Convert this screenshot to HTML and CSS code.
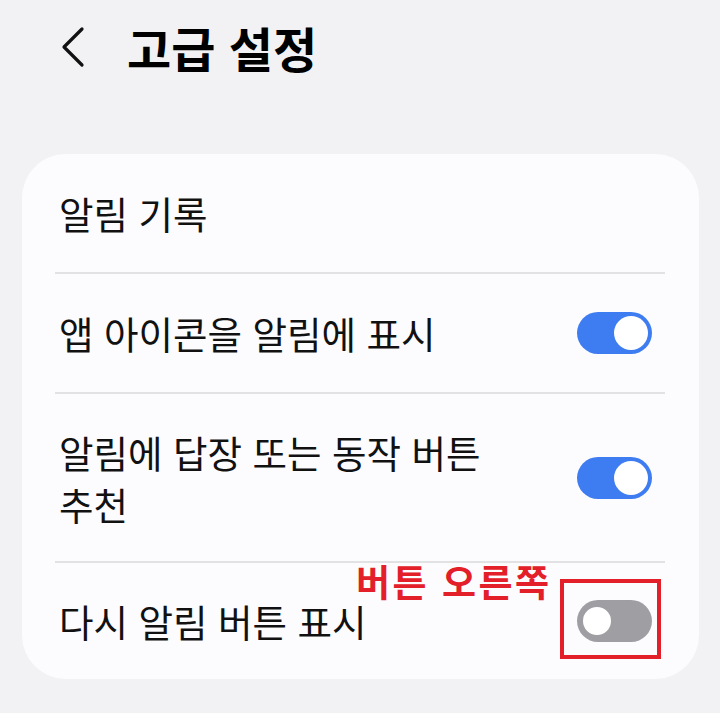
FILE: index.html
```html
<!DOCTYPE html>
<html lang="ko">
<head>
    <meta charset="UTF-8">
    <meta name="viewport" content="width=device-width, initial-scale=1.0">
    <title>고급 설정</title>
    <link rel="stylesheet" href="styles.css">
</head>
<body>

    <header class="top-bar">
        <svg class="back" width="24" height="42" viewBox="0 0 24 42">
            <path d="M21 3 L3 21 L21 39" fill="none" stroke="#111" stroke-width="3.2" stroke-linecap="round" stroke-linejoin="round"/>
        </svg>
        <h1>고급 설정</h1>
    </header>

    <div class="card">
        <div class="row">
            <span class="label">알림 기록</span>
        </div>
        <div class="divider"></div>

        <div class="row">
            <span class="label">앱 아이콘을 알림에 표시</span>
            <span class="switch on"><span class="thumb"></span></span>
        </div>
        <div class="divider"></div>

        <div class="row tall">
            <span class="label">알림에 답장 또는 동작 버튼<br>추천</span>
            <span class="switch on"><span class="thumb"></span></span>
        </div>
        <div class="divider"></div>

        <div class="row last">
            <span class="label">다시 알림 버튼 표시</span>
            <span class="switch"><span class="thumb"></span></span>
            <!-- annotation -->
            <span class="note">버튼 오른쪽</span>
            <span class="note-box"></span>
        </div>
    </div>

</body>
</html>
```

FILE: styles.css
```css
body {
    margin: 0;
    background: #f2f2f4;
    font-family: "Noto Sans CJK KR", "Noto Sans", sans-serif;
    color: #111;
}

/* Barre du haut */
.top-bar {
    height: 94px;
    display: flex;
    align-items: center;
    padding-left: 61px;
}

.back {
    display: block;
}

.top-bar h1 {
    margin: 0 0 0 42px;
    font-size: 48px;
    font-weight: 700;
    line-height: 1;
    color: #000;
}

/* Carte des options */
.card {
    margin: 60px 21px 0 22px;
    background: #fcfcfe;
    border-radius: 44px;
}

.row {
    position: relative;
    min-height: 118px;
    display: flex;
    align-items: center;
    gap: 24px;
    padding: 0 47px 0 37px;
    box-sizing: border-box;
}

.row.tall {
    min-height: 167px;
}

.row.last {
    min-height: 116px;
}

.label {
    flex: 1;
    font-size: 37.5px;
    line-height: 52px;
}

.divider {
    height: 2px;
    margin: 0 34px 0 33px;
    background: #e2e2e5;
}

/* Interrupteurs */
.switch {
    flex: none;
    width: 75px;
    height: 42px;
    border-radius: 21px;
    background: #9e9ea3;
    display: flex;
    align-items: center;
    padding: 0 4px;
    box-sizing: border-box;
}

.switch .thumb {
    width: 34px;
    height: 34px;
    border-radius: 50%;
    background: #fff;
    box-sizing: border-box;
    border: 3px solid #9e9ea3;
    margin-left: -1px;
}

.switch.on {
    background: #3d7cf1;
    justify-content: flex-end;
}

.switch.on .thumb {
    border: none;
    margin: 0;
}

/* Annotation rouge */
.note {
    position: absolute;
    left: 334px;
    top: -2px;
    font-size: 37px;
    font-weight: 700;
    letter-spacing: 2.5px;
    line-height: 40px;
    color: #e3202a;
}

.note-box {
    position: absolute;
    left: 538px;
    top: 16px;
    width: 101px;
    height: 80px;
    border: 4px solid #e3202a;
    box-sizing: border-box;
}
```
